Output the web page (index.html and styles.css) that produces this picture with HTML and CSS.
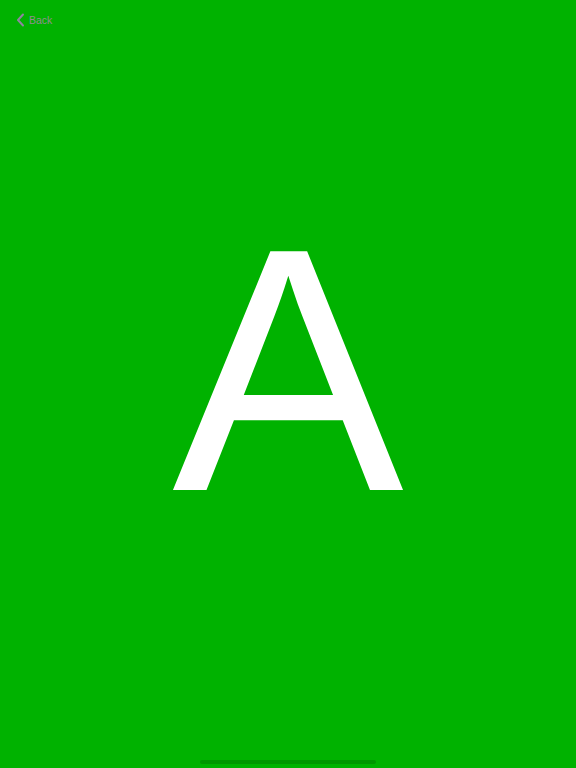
FILE: index.html
```html
<!DOCTYPE html>
<html>
<head>
<meta charset="utf-8">
<link rel="stylesheet" href="styles.css">
</head>
<body>
<div class="screen">
  <div class="nav">
    <a class="back">
      <svg class="chev" width="9" height="14" viewBox="0 0 9 14"><path d="M7 1.5 L2 7 L7 12.5" fill="none" stroke="#8e84a0" stroke-width="2" stroke-linecap="round" stroke-linejoin="round"/></svg>
      <span>Back</span>
    </a>
  </div>
  <div class="main">
    <div class="letter">A</div>
  </div>
  <div class="home"><div class="bar"></div></div>
</div>
</body>
</html>
```
FILE: styles.css
```css
html, body {
  margin: 0;
  padding: 0;
  width: 576px;
  height: 768px;
  overflow: hidden;
  background: #00b200;
}
.screen {
  width: 576px;
  height: 768px;
  display: flex;
  flex-direction: column;
  font-family: "Liberation Sans", Arial, sans-serif;
}
.nav {
  height: 40px;
  display: flex;
  align-items: flex-start;
  padding: 13px 0 0 16px;
  box-sizing: border-box;
}
.back {
  display: flex;
  align-items: center;
  gap: 4px;
  color: #8f8f8f;
  font-size: 10.5px;
}
.chev { display: block; }
.main {
  flex: 1;
  display: flex;
  justify-content: center;
  align-items: center;
}
.letter {
  color: #ffffff;
  font-family: "Liberation Sans", Arial, sans-serif;
  font-size: 347px;
  line-height: 1;
  margin-top: -54px;
}
.home {
  height: 14px;
  display: flex;
  justify-content: center;
  align-items: flex-start;
}
.bar {
  width: 176px;
  height: 4px;
  border-radius: 2px;
  background: #009800;
  margin-top: 6px;
}
```
